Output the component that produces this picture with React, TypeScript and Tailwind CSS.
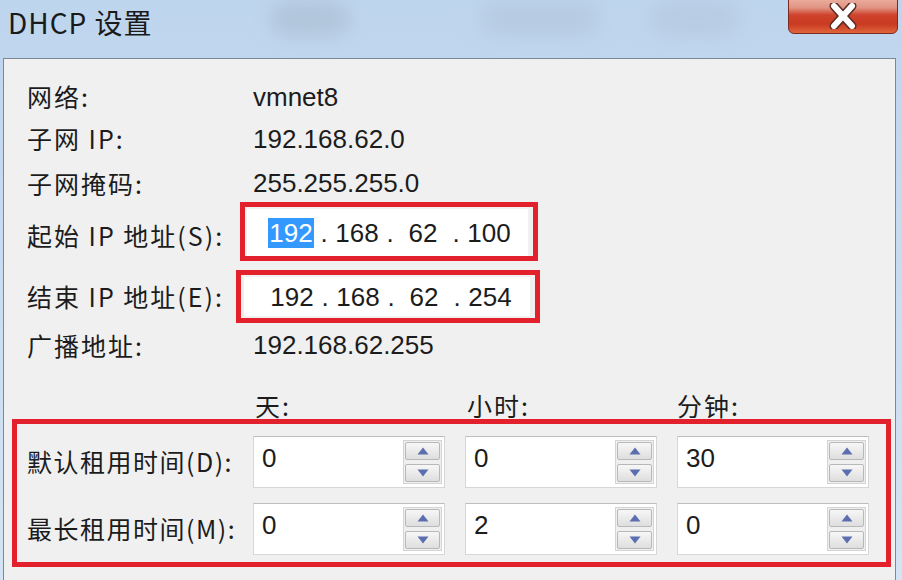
import React from "react";

const CJK = { fontFamily: '"Noto Sans CJK SC", "Noto Sans", sans-serif' };
const NUM = { fontFamily: '"Liberation Sans", "Noto Sans CJK SC", sans-serif' };

function Tri({ up }: { up?: boolean }) {
  return (
    <svg width="12" height="8" viewBox="0 0 12 8">
      {up ? <polygon points="6,0.5 11.5,7.5 0.5,7.5" fill="#5a6eb0" /> : <polygon points="0.5,0.5 11.5,0.5 6,7.5" fill="#5a6eb0" />}
    </svg>
  );
}

function Spin({ value }: { value: string }) {
  return (
    <div className="w-[192px] h-[52px] bg-white border border-[#d6d6d6] border-t-[#bdbdbd] flex">
      <div className="flex-1 pl-[8px] pt-[5px] text-[26px] leading-[32px] text-[#1c1c1c]" style={NUM}>
        {value}
      </div>
      <div className="w-[39px] my-[3px] mr-[2px] border border-[#d4d4d4] bg-[#efefef] flex flex-col gap-[4px] p-[1px]">
        <div className="flex-1 border border-[#b8b8b8] rounded-[2px] bg-gradient-to-b from-[#f7f7f7] to-[#dedede] flex items-center justify-center">
          <Tri up />
        </div>
        <div className="flex-1 border border-[#b8b8b8] rounded-[2px] bg-gradient-to-b from-[#f7f7f7] to-[#dedede] flex items-center justify-center">
          <Tri />
        </div>
      </div>
    </div>
  );
}

function IpField({ parts, highlightFirst }: { parts: string[]; highlightFirst?: boolean }) {
  return (
    <div className="flex items-center h-full text-[26px] leading-[30px] text-[#1c1c1c]" style={NUM}>
      {parts.map((p, i) => (
        <React.Fragment key={i}>
          <div className="w-[48px] flex justify-center">
            {i === 0 && highlightFirst ? (
              <span className="bg-[#3399ff] text-white px-[1px]">{p}</span>
            ) : (
              <span>{p}</span>
            )}
          </div>
          {i < 3 && <div className="w-[18px] flex justify-center">.</div>}
        </React.Fragment>
      ))}
    </div>
  );
}

function InfoRow({ label, value, extra }: { label: string; value: string; extra?: string }) {
  return (
    <div className={`h-[42px] flex items-center pl-[23px] ${extra ?? ""}`}>
      <div className="w-[226px] text-[25px] tracking-[2px] text-[#1c1c1c]" style={CJK}>
        {label}
      </div>
      <div className="text-[26px] text-[#1c1c1c]" style={NUM}>
        {value}
      </div>
    </div>
  );
}

export default function App() {
  return (
    <div className="w-[902px] h-[580px] overflow-hidden bg-gradient-to-b from-[#bed5ee] to-[#d4e4f4]">
      {/* title bar */}
      <div className="h-[58px] relative flex items-start pl-[8px] pt-[3px]">
        <div className="absolute left-[270px] top-[2px] w-[80px] h-[34px] rounded-full bg-[#a3b4c6] opacity-50 blur-[10px]" />
        <div className="absolute left-[480px] top-[4px] w-[120px] h-[30px] rounded-full bg-[#a6b7c9] opacity-40 blur-[12px]" />
        <div className="absolute left-[650px] top-[4px] w-[90px] h-[30px] rounded-full bg-[#aab9ca] opacity-40 blur-[12px]" />
        <div className="relative text-[28px] tracking-[1px] leading-[38px] text-[#1a1a1a]" style={CJK}>
          DHCP 设置
        </div>
        <div className="absolute left-[788px] top-[-4px] w-[110px] h-[38px] rounded-b-[6px] border border-[#7a2a1e] bg-[linear-gradient(to_bottom,#eeb4a6_0%,#e09382_30%,#cf432c_50%,#c93a22_75%,#e0653c_100%)] flex items-center justify-center pt-[2px]">
          <svg width="34" height="26" viewBox="0 0 34 26">
            <path d="M8 3 L26 23 M26 3 L8 23" stroke="#5a2a22" strokeWidth="9" strokeLinecap="round" />
            <path d="M8 3 L26 23 M26 3 L8 23" stroke="#ffffff" strokeWidth="6" strokeLinecap="round" />
          </svg>
        </div>
      </div>

      {/* client area */}
      <div className="ml-[3px] w-[893px] h-[530px] border border-[#7d8894] bg-[#f0f0f0] pt-[17px]">
        <InfoRow label="网络:" value="vmnet8" />
        <InfoRow label="子网 IP:" value="192.168.62.0" />
        <InfoRow label="子网掩码:" value="255.255.255.0" extra="pt-[5px]" />

        <div className="h-[59px] flex items-stretch pl-[23px]">
          <div className="w-[213px] flex items-center pt-[8px] text-[25px] tracking-[2px] text-[#1c1c1c]" style={CJK}>
            起始 IP 地址(S):
          </div>
          <div className="w-[298px] border-[5px] border-[#e3212d] pt-[2px] pb-[0px] pl-[2px] pr-[5px]">
            <div className="h-full bg-white pl-[20px]">
              <IpField parts={["192", "168", "62", "100"]} highlightFirst />
            </div>
          </div>
        </div>

        <div className="h-[53px] mt-[9px] flex items-stretch pl-[23px]">
          <div className="w-[209px] flex items-center text-[25px] tracking-[2px] text-[#1c1c1c]" style={CJK}>
            结束 IP 地址(E):
          </div>
          <div className="w-[304px] border-[5px] border-[#e3212d] pt-[2px] pb-[2px] pl-[3px] pr-[5px]">
            <div className="h-full bg-white pl-[24px]">
              <IpField parts={["192", "168", "62", "254"]} />
            </div>
          </div>
        </div>

        <InfoRow label="广播地址:" value="192.168.62.255" extra="h-[45px]" />

        <div className="h-[51px] flex items-end pl-[251px] pb-[1px] text-[25px] tracking-[2px] leading-[26px] text-[#1c1c1c]" style={CJK}>
          <div className="w-[212px]">天:</div>
          <div className="w-[210px]">小时:</div>
          <div>分钟:</div>
        </div>

        <div className="ml-[8px] w-[879px] h-[148px] border-[5px] border-[#e3212d] pt-[12px] flex flex-col gap-[15px]">
          <div className="flex items-center h-[52px]">
            <div className="w-[236px] pl-[10px] text-[25px] tracking-[1.5px] text-[#1c1c1c] whitespace-nowrap" style={CJK}>
              默认租用时间(D):
            </div>
            <div className="flex gap-[20px]">
              <Spin value="0" />
              <Spin value="0" />
              <Spin value="30" />
            </div>
          </div>
          <div className="flex items-center h-[52px]">
            <div className="w-[236px] pl-[10px] text-[25px] tracking-[1.5px] text-[#1c1c1c] whitespace-nowrap" style={CJK}>
              最长租用时间(M):
            </div>
            <div className="flex gap-[20px]">
              <Spin value="0" />
              <Spin value="2" />
              <Spin value="0" />
            </div>
          </div>
        </div>
      </div>
    </div>
  );
}
